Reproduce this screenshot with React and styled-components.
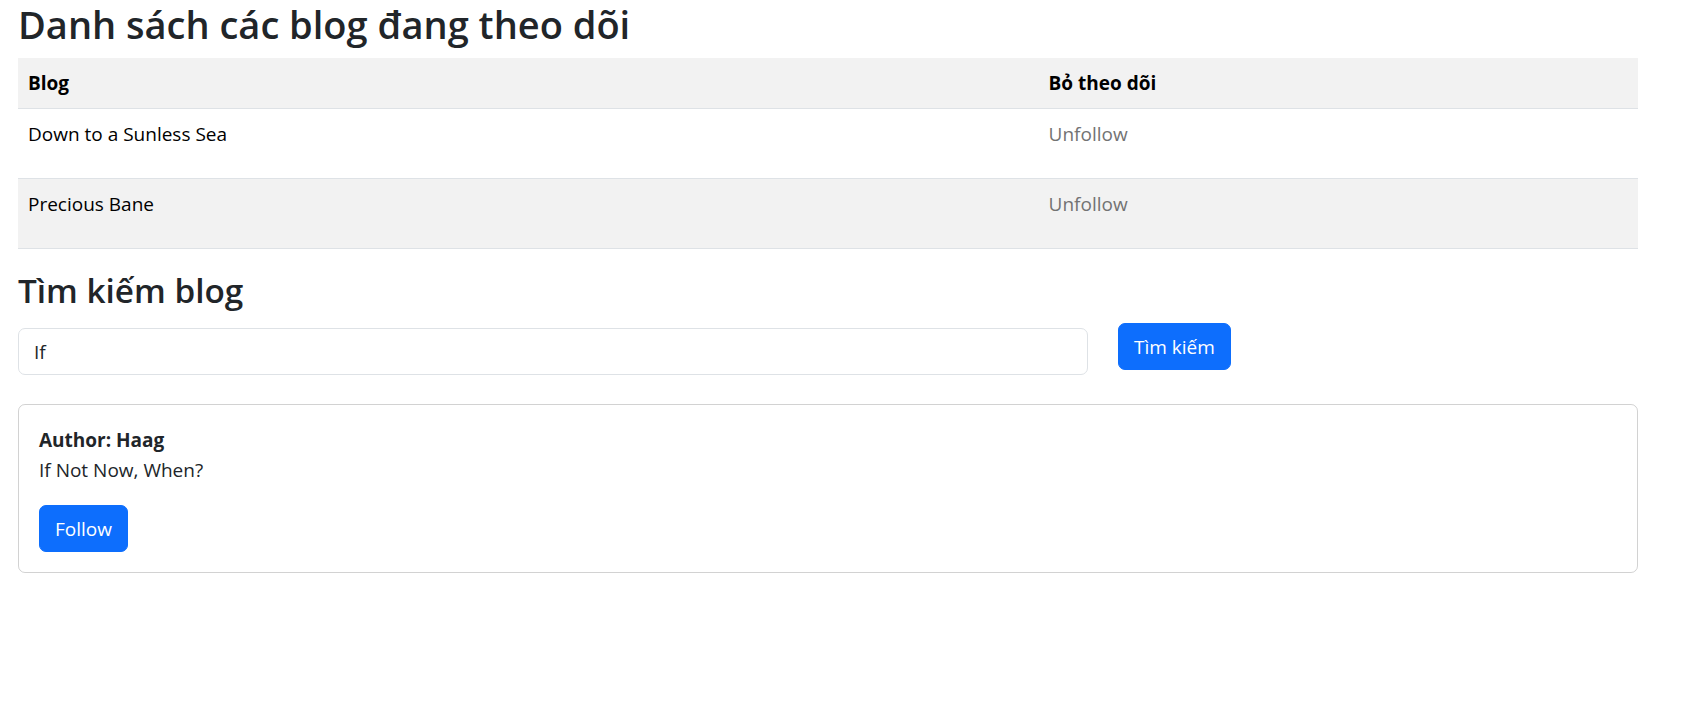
import styled, { createGlobalStyle } from "styled-components";
import { useState } from "react";

const FONT = `"Open Sans", "Noto Sans", Arial, sans-serif`;

const GlobalStyle = createGlobalStyle`
    body {
        margin: 0;
        font-family: ${FONT};
        font-size: 19px;
        line-height: 30px;
        color: #212529;
        background: #fff;
    }
`

const Page = styled.main`
    padding: 0 56px 0 18px;
`

const Title = styled.h2`
    font-size: 38px;
    font-weight: 600;
    line-height: 48px;
    margin: 0 0 10px;
`

const SubTitle = styled.h3`
    font-size: 33.3px;
    font-weight: 600;
    line-height: 42px;
    margin: 0 0 12px;
`

const Table = styled.table`
    width: 100%;
    border-collapse: collapse;
    margin-bottom: 20px;
    color: #000;
`

const Row = styled.tr`
    background: ${(props) => (props.$striped ? "#f2f2f2" : "#fff")};
    border-bottom: 1px solid #dee2e6;
`

const HeadCell = styled.th`
    text-align: left;
    font-weight: 700;
    padding: 10px;
    vertical-align: top;
    width: ${(props) => props.$width || "auto"};
`

const Cell = styled.td`
    padding: 10px;
    height: 49px;
    vertical-align: top;
`

const UnfollowText = styled.span`
    color: #737373;
    cursor: pointer;
`

const SearchRow = styled.div`
    display: grid;
    grid-template-columns: calc((100% + 30px) * 2 / 3 - 30px) auto;
    column-gap: 30px;
    align-items: start;
    justify-content: start;
    margin-bottom: 29px;
`

const Input = styled.input`
    box-sizing: border-box;
    margin-top: 5px;
    width: 100%;
    height: 47px;
    padding: 7px 15px;
    border: 1px solid #dee2e6;
    border-radius: 7px;
    font-family: ${FONT};
    font-size: 19px;
    line-height: 30px;
    color: #212529;
    outline: none;
`

const Button = styled.button`
    height: 47px;
    padding: 7px 15px;
    border: 1px solid #0d6efd;
    border-radius: 7px;
    background: #0d6efd;
    color: #fff;
    font-family: ${FONT};
    font-size: 19px;
    line-height: 30px;
    cursor: pointer;
`

const Card = styled.section`
    border: 1px solid rgba(0, 0, 0, 0.175);
    border-radius: 7px;
    padding: 20px;
`

const Author = styled.div`
    font-weight: 700;
`

const BlogName = styled.p`
    margin: 0 0 20px;
`

const followed = [
    { id: 1, title: "Down to a Sunless Sea" },
    { id: 2, title: "Precious Bane" },
]

export default function App() {
    const [query, setQuery] = useState("If")

    return (
        <>
            <GlobalStyle />
            <Page>
                <Title>Danh sách các blog đang theo dõi</Title>
                <Table>
                    <tbody>
                        <Row $striped>
                            <HeadCell $width="63%">Blog</HeadCell>
                            <HeadCell>Bỏ theo dõi</HeadCell>
                        </Row>
                        {followed.map((blog, index) => (
                            <Row key={blog.id} $striped={index % 2 === 1}>
                                <Cell>{blog.title}</Cell>
                                <Cell><UnfollowText>Unfollow</UnfollowText></Cell>
                            </Row>
                        ))}
                    </tbody>
                </Table>

                <SubTitle>Tìm kiếm blog</SubTitle>
                <SearchRow>
                    <Input value={query} onChange={(event) => setQuery(event.target.value)} />
                    <Button>Tìm kiếm</Button>
                </SearchRow>

                <Card>
                    <Author>Author: Haag</Author>
                    <BlogName>If Not Now, When?</BlogName>
                    <Button>Follow</Button>
                </Card>
            </Page>
        </>
    )
}
